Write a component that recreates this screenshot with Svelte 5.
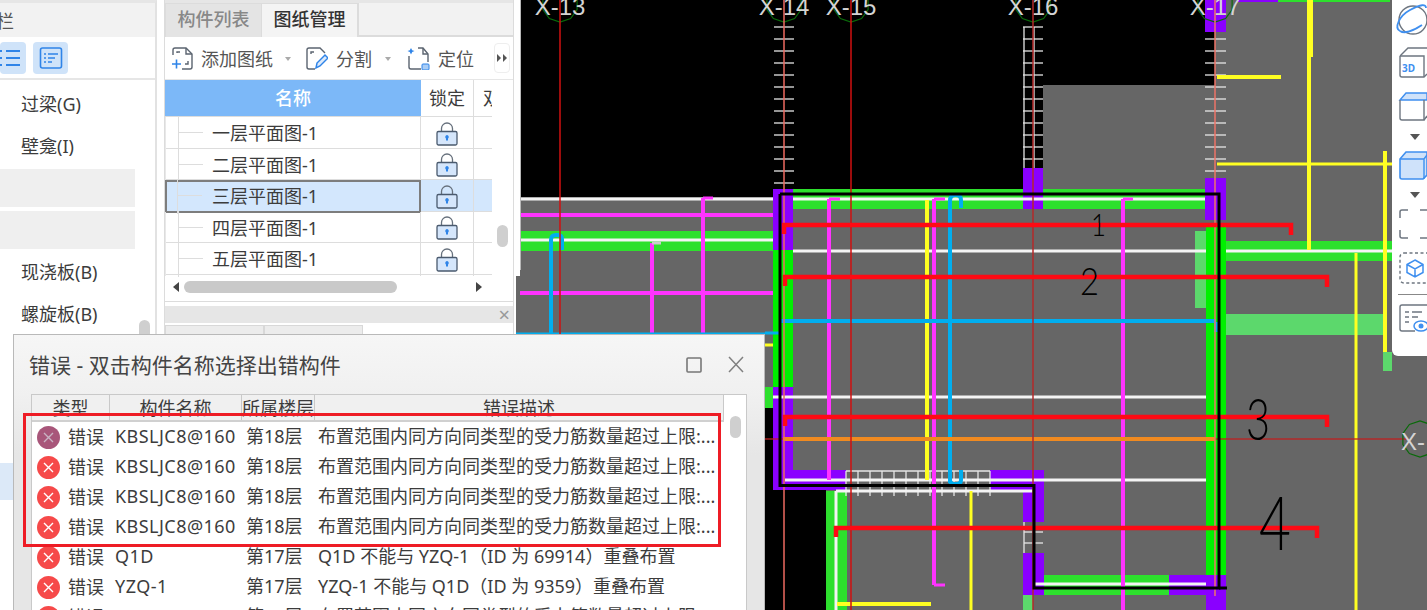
<script>
  const sideItems = [
    { label: '过梁(G)' },
    { label: '壁龛(I)' },
    { label: '', blank: true },
    { label: '', blank: true },
    { label: '现浇板(B)' },
    { label: '螺旋板(B)' }
  ];

  const drawings = ['一层平面图-1', '二层平面图-1', '三层平面图-1', '四层平面图-1', '五层平面图-1'];

  const limitMsg = '布置范围内同方向同类型的受力筋数量超过上限:...';
  const errors = [
    { name: 'KBSLJC8@160', floor: '第18层', desc: limitMsg, dim: true },
    { name: 'KBSLJC8@160', floor: '第18层', desc: limitMsg },
    { name: 'KBSLJC8@160', floor: '第18层', desc: limitMsg },
    { name: 'KBSLJC8@160', floor: '第18层', desc: limitMsg },
    { name: 'Q1D', floor: '第17层', desc: 'Q1D 不能与 YZQ-1（ID 为 69914）重叠布置' },
    { name: 'YZQ-1', floor: '第17层', desc: 'YZQ-1 不能与 Q1D（ID 为 9359）重叠布置' },
    { name: 'KBSLJC8@160', floor: '第17层', desc: limitMsg }
  ];

  // drawing colours
  const GRAY = '#666666';
  const BLACK = '#000000';
  const GREEN = '#2de02d';
  const LIME = '#00f000';
  const SOFT = '#5cd86c';
  const PURPLE = '#8a00ff';
  const WHITE = '#f4f4f4';
  const PINK = '#ff33ff';
  const YELLOW = '#ffff22';
  const CYAN = '#00aeef';
  const RED = '#ff0a14';

  // [x, y, w, h, colour]
  const blocks = [
    [516, 197, 911, 413, GRAY],
    [1043, 85, 172, 112, GRAY],
    [1215, 0, 212, 197, GRAY],
    [765, 485, 61, 125, BLACK],
    [765, 408, 8, 77, BLACK],
    [520, 231, 253, 20, GREEN],
    [793, 189, 412, 20, GREEN],
    [1226, 241, 166, 20, GREEN],
    [1044, 575, 125, 20, GREEN],
    [765, 387, 8, 21, GREEN],
    [826, 491, 21, 119, GREEN],
    [1278, 0, 112, 2, GREEN],
    [773, 250, 20, 137, LIME],
    [1206, 225, 20, 350, LIME],
    [1195, 231, 11, 77, SOFT],
    [1226, 314, 158, 21, SOFT],
    [1383, 352, 9, 19, SOFT],
    [1023, 595, 10, 15, SOFT],
    [773, 189, 20, 61, PURPLE],
    [773, 387, 20, 103, PURPLE],
    [773, 470, 73, 20, PURPLE],
    [990, 470, 54, 20, PURPLE],
    [1023, 470, 21, 52, PURPLE],
    [1023, 553, 21, 42, PURPLE],
    [1169, 575, 57, 20, PURPLE],
    [1206, 595, 20, 15, PURPLE],
    [1023, 168, 20, 41, PURPLE],
    [1205, 0, 21, 32, PURPLE],
    [1205, 178, 21, 42, PURPLE],
    [1238, 0, 40, 2, PURPLE]
  ];

  // [x1, y1, x2, y2, colour, width]
  const lines = [
    [520, 199, 773, 199, WHITE, 3],
    [793, 199, 1205, 199, WHITE, 3],
    [520, 240, 773, 240, WHITE, 3],
    [793, 251, 1206, 251, WHITE, 3],
    [1226, 251, 1392, 251, WHITE, 3],
    [773, 397, 1206, 397, WHITE, 3],
    [785, 480, 1206, 480, WHITE, 3],
    [836, 491, 1033, 491, WHITE, 3],
    [836, 491, 836, 610, WHITE, 3],
    [1035, 584, 1206, 584, WHITE, 3],
    [520, 215, 773, 215, PINK, 4],
    [520, 293, 773, 293, PINK, 4],
    [703, 198, 703, 335, PINK, 4],
    [703, 198, 713, 198, PINK, 3],
    [652, 243, 652, 335, PINK, 4],
    [652, 243, 661, 243, '#cccccc', 3],
    [829, 199, 829, 480, PINK, 4],
    [829, 199, 840, 199, PINK, 3],
    [934, 199, 934, 585, PINK, 4],
    [934, 199, 945, 199, PINK, 3],
    [934, 585, 945, 585, PINK, 3],
    [1123, 199, 1123, 610, PINK, 4],
    [1123, 199, 1133, 199, PINK, 3],
    [927, 200, 927, 480, YELLOW, 4],
    [971, 491, 971, 610, YELLOW, 3],
    [837, 604, 931, 604, YELLOW, 4],
    [1310, 0, 1310, 57, YELLOW, 6],
    [1309, 57, 1309, 250, YELLOW, 4],
    [1217, 77, 1281, 77, YELLOW, 4],
    [1217, 164, 1392, 164, YELLOW, 3],
    [1385, 151, 1385, 352, YELLOW, 4],
    [1356, 253, 1356, 610, YELLOW, 3],
    [765, 345, 773, 345, YELLOW, 3],
    [781, 321, 1216, 321, CYAN, 4],
    [516, 334, 765, 334, CYAN, 3],
    [765, 333, 780, 333, CYAN, 3]
  ];

  // bent bars with rounded hooks
  const hooks = [
    'M551 335V240q0-5 5-5h2q4 0 4 4V250',
    'M950 483V201q0-6 5-6h1q5 0 5 5V208',
    'M950 470V480q0 4 5 4h1q5 0 5-4V470',
    'M1216 322V332'
  ];

  // ladders of rebar ticks on the axes
  const ticks = [];
  for (let y = 27; y <= 183; y += 12) ticks.push([774, y, 794, y]);
  for (let y = 27; y <= 159; y += 12) ticks.push([1023, y, 1043, y]);
  for (let y = 39; y <= 171; y += 12) ticks.push([1205, y, 1226, y]);
  ticks.push([1024, 27, 1024, 168], [1034, 27, 1034, 168]);
  for (let x = 846; x <= 990; x += 12) ticks.push([x, 471, x, 496]);
  ticks.push([846, 471, 990, 471]);
  ticks.push([1024, 522, 1024, 553], [1034, 530, 1034, 553]);
  ticks.push([1024, 532, 1043, 532], [1024, 543, 1043, 543]);

  const axes = [
    { label: 'X-13', x: 560, y2: 335, color: '#d01010' },
    { label: 'X-14', x: 784, y2: 610, color: '#ee6a60' },
    { label: 'X-15', x: 851, y2: 610, color: '#d01010' },
    { label: 'X-16', x: 1033, y2: 610, color: '#b52a2a' },
    { label: 'X-17', x: 1215, y2: 596, color: '#ee7468' }
  ];

  // section markers: y of the run, start and end x
  const sections = [
    [225, 784, 1291],
    [277, 785, 1327],
    [417, 785, 1327],
    [528, 836, 1317]
  ];

  const marks = [
    { n: '1', x: 1091, y: 236, size: 32, w: 15 },
    { n: '2', x: 1080, y: 295, size: 38, w: 19 },
    { n: '3', x: 1246, y: 440, size: 58, w: 24 },
    { n: '4', x: 1259, y: 550, size: 74, w: 32 }
  ];

  const hexagon = (cx, cy) => {
    const r = 18;
    let pts = [];
    for (let i = 0; i < 10; i++) {
      const a = (i * Math.PI) / 5 + Math.PI / 10;
      pts.push(`${(cx + r * Math.cos(a)).toFixed(1)},${(cy + r * Math.sin(a)).toFixed(1)}`);
    }
    return pts.join(' ');
  };
</script>

<div class="app">
  <aside class="sidebar">
    <div class="side-title">栏</div>
    <div class="side-tools">
      <button class="view-btn first" aria-label="list">
        <svg width="26" height="22" viewBox="0 0 26 22">
          <path d="M0 4h2M0 11h2M0 18h2M6 4h14M6 11h14M6 18h14" stroke="#2f84e8" stroke-width="2" fill="none" />
        </svg>
      </button>
      <button class="view-btn" aria-label="detail">
        <svg width="24" height="24" viewBox="0 0 24 24">
          <rect x="1.5" y="2" width="21" height="20" rx="2" fill="none" stroke="#2f84e8" stroke-width="1.6" />
          <path d="M5 8h2M9 8h10M5 12h2M9 12h7M5 16h2M9 16h4" stroke="#2f84e8" stroke-width="1.4" fill="none" />
        </svg>
      </button>
    </div>
    <ul class="side-list">
      {#each sideItems as item}
        <li class:blank={item.blank}>{item.label}</li>
      {/each}
      <li class="spacer"></li>
      <li class="current"></li>
    </ul>
    <div class="side-thumb"></div>
  </aside>

  <section class="panels">
    <div class="panel">
      <div class="tabs">
        <div class="tab">构件列表</div>
        <div class="tab active">图纸管理</div>
      </div>
      <div class="tools">
        <div class="tool">
          <svg width="23" height="24" viewBox="0 0 23 24" fill="none">
            <path d="M2 9V4a2 2 0 0 1 2-2h11l6 6v13a2 2 0 0 1-2 2h-8" stroke="#5b6470" stroke-width="1.4" />
            <path d="M15 2v6h6M6 7V6h3M17 15v3h-3" stroke="#5b6470" stroke-width="1.4" />
            <path d="M1 18h9M5.500 13.500v9" stroke="#2f84e8" stroke-width="1.6" />
          </svg>
          <span>添加图纸</span>
          <i class="caret"></i>
        </div>
        <div class="tool">
          <svg width="23" height="24" viewBox="0 0 23 24" fill="none">
            <path d="M10 23H4a2 2 0 0 1-2-2V4a2 2 0 0 1 2-2h11l5 5" stroke="#5b6470" stroke-width="1.4" />
            <path d="M6 8V6h3" stroke="#5b6470" stroke-width="1.4" />
            <path d="M11 22l1-5 8-8 3 3-8 8z" fill="#dbe9fb" stroke="#2f84e8" stroke-width="1.5" />
          </svg>
          <span>分割</span>
          <i class="caret"></i>
        </div>
        <div class="tool">
          <svg width="23" height="24" viewBox="0 0 23 24" fill="none">
            <path d="M2 10v11a2 2 0 0 0 2 2h10M11 2h5l5 6v8" stroke="#5b6470" stroke-width="1.4" />
            <path d="M16 2v6h5" stroke="#5b6470" stroke-width="1.4" />
            <path d="M4 2l1.200 2.300L7.500 5 5.200 6 4 8.500 2.800 6 .500 5l2.300-.7z" fill="#2f84e8" />
            <rect x="15" y="18" width="7" height="6" rx="1" fill="#a9cdf6" stroke="#2f84e8" />
          </svg>
          <span>定位</span>
        </div>
        <div class="more">
          <svg width="10" height="8" viewBox="0 0 10 8"><path d="M0 0l4 4-4 4zM6 0l4 4-4 4z" fill="#555" /></svg>
        </div>
      </div>
      <div class="grid-wrap">
        <div class="sheet">
          <div class="sheet-head">
            <div class="h-name">名称</div>
            <div class="h-lock">锁定</div>
            <div class="h-more">双</div>
          </div>
          {#each drawings as name, i}
            <div class="sheet-row" class:selected={i === 2}>
              <div class="c-name"><i class="branch"></i>{name}</div>
              <div class="c-lock">
                <svg width="22" height="24" viewBox="0 0 22 24" fill="none">
                  <path d="M5.500 10V6.500a5.500 5.500 0 0 1 11 0V10" stroke="#66707c" stroke-width="1.3" />
                  <rect x="1" y="9.500" width="20" height="13.500" rx="1.500" fill="#d5e6fb" stroke="#4a5a6e" stroke-width="1.3" />
                  <path d="M11 13.500v5" stroke="#2f84e8" stroke-width="2" />
                  <circle cx="11" cy="15" r="1.800" fill="#2f84e8" />
                </svg>
              </div>
              <div class="c-more"></div>
            </div>
          {/each}
        </div>
        <div class="vscroll"><div class="vthumb"></div></div>
      </div>
      <div class="hscroll">
        <i class="arrow left"></i>
        <div class="hthumb"></div>
        <i class="arrow right"></i>
      </div>
    </div>
    <div class="panel-two">
      <div class="two-head"><span>×</span></div>
      <div class="two-tabs"><div></div><div></div></div>
    </div>
  </section>

  <main class="canvas">
    <svg class="plan" width="911" height="610" viewBox="516 0 911 610">
      <rect x="516" y="0" width="911" height="610" fill={BLACK} />
      {#each blocks as b}
        <rect x={b[0]} y={b[1]} width={b[2]} height={b[3]} fill={b[4]} />
      {/each}
      {#each ticks as t}
        <line x1={t[0]} y1={t[1]} x2={t[2]} y2={t[3]} stroke="#e6e6e6" stroke-width="1.300" />
      {/each}
      {#each lines as l}
        <line x1={l[0]} y1={l[1]} x2={l[2]} y2={l[3]} stroke={l[4]} stroke-width={l[5]} />
      {/each}
      {#each hooks as d}
        <path {d} fill="none" stroke={CYAN} stroke-width="4" />
      {/each}
      <line x1="765" y1="439" x2="1408" y2="439" stroke="#c02020" stroke-width="1.300" opacity="0.850" />
      <line x1="783" y1="439" x2="1215" y2="439" stroke="#f08a20" stroke-width="4" />

      {#each axes as a}
        <polygon points={hexagon(a.x, 4)} fill="none" stroke="#0a6a0a" stroke-width="1.200" />
        <text x={a.x} y="15" class="axis-label">{a.label}</text>
        <line x1={a.x} y1="0" x2={a.x} y2={a.y2} stroke={a.color} stroke-width="1.500" />
      {/each}
      <polygon points={hexagon(1420, 439)} fill="none" stroke="#0a6a0a" stroke-width="1.200" />
      <text x="1401" y="450" class="axis-label side">X-</text>

      {#each sections as s}
        <path d="M{s[1]} {s[0] + 9}V{s[0]}H{s[2]}V{s[0] + 10}" fill="none" stroke={RED} stroke-width="4.500" />
      {/each}
      <path d="M780 194H1219V588H1034V485.500H780V194" fill="none" stroke="#000" stroke-width="3" />
      <path d="M1219 588H1227" stroke="#000" stroke-width="3" />
      {#each marks as m}
        <text x={m.x} y={m.y} font-size={m.size} textLength={m.w} lengthAdjust="spacingAndGlyphs" class="mark">{m.n}</text>
      {/each}
      <rect x="516" y="0" width="4" height="276" fill="#ffffff" />
      <line x1="520.500" y1="0" x2="520.500" y2="270" stroke="#b8b8b8" />
    </svg>

    <nav class="view-tools">
      <svg width="35" height="36" viewBox="0 0 35 36" fill="none">
        <circle cx="21" cy="18" r="14" stroke="#6e7680" stroke-width="1.400" />
        <path d="M8 29C2 26 7 14 18 8S34 2 34 6" stroke="#3f8fef" stroke-width="1.800" />
        <path d="M8 29c4 3 13 0 22-6" stroke="#3f8fef" stroke-width="1.800" />
      </svg>
      <svg width="35" height="32" viewBox="0 0 35 32" fill="none">
        <path d="M8 10l8-8h19M8 10v19a2 2 0 0 0 2 2h22l3-3" stroke="#6e7680" stroke-width="1.400" />
        <path d="M8 10h24v21" stroke="#6e7680" stroke-width="1.400" />
        <text x="10" y="26" class="tag3d">3D</text>
      </svg>
      <svg width="35" height="32" viewBox="0 0 35 32" fill="none">
        <path d="M8 10l6-7h21v7z" fill="#cfe2fa" stroke="#3f8fef" stroke-width="1.400" />
        <path d="M8 10v18a2 2 0 0 0 2 2h22V10" stroke="#6e7680" stroke-width="1.400" />
        <path d="M32 30l3-4" stroke="#6e7680" stroke-width="1.400" />
      </svg>
      <i class="down"></i>
      <svg width="35" height="32" viewBox="0 0 35 32" fill="none">
        <path d="M8 10l6-7h21v23l-4 4H10a2 2 0 0 1-2-2z" fill="#cfe2fa" stroke="#3f8fef" stroke-width="1.600" />
        <path d="M8 10h24v20M32 10l3-4" stroke="#3f8fef" stroke-width="1.400" />
      </svg>
      <i class="down"></i>
      <svg width="35" height="32" viewBox="0 0 35 32" fill="none">
        <path d="M8 10V4a2 2 0 0 1 2-2h6M28 2h7M8 22v6a2 2 0 0 0 2 2h6M28 30h7" stroke="#6e7680" stroke-width="1.500" />
      </svg>
      <svg width="35" height="34" viewBox="0 0 35 34" fill="none">
        <rect x="8" y="2" width="32" height="30" rx="4" stroke="#6e7680" stroke-width="1.400" stroke-dasharray="3 2.500" />
        <path d="M23 9l8 4.500v8L23 26l-8-4.500v-8zM15 13.500l8 4.500 8-4.500M23 18v8" stroke="#3f8fef" stroke-width="1.500" />
      </svg>
      <div class="tools-rule"></div>
      <svg width="35" height="30" viewBox="0 0 35 30" fill="none">
        <path d="M35 2H10a2 2 0 0 0-2 2v22a2 2 0 0 0 2 2h13" stroke="#6e7680" stroke-width="1.400" />
        <path d="M13 9h4M20 9h10M13 14h4M20 14h6M13 19h4" stroke="#6e7680" stroke-width="1.400" />
        <ellipse cx="29" cy="23" rx="7" ry="5" stroke="#3f8fef" stroke-width="1.500" />
        <circle cx="29" cy="23" r="2.500" fill="#3f8fef" />
      </svg>
    </nav>
  </main>

  <div class="dialog">
    <header class="dlg-title">
      <span>错误 - 双击构件名称选择出错构件</span>
      <div class="dlg-btns">
        <svg width="16" height="16" viewBox="0 0 16 16"><rect x="1" y="1" width="14" height="14" rx="1" fill="none" stroke="#777" stroke-width="1.600" /></svg>
        <svg width="16" height="17" viewBox="0 0 16 17"><path d="M1 1l14 15M15 1L1 16" stroke="#808080" stroke-width="1.500" fill="none" /></svg>
      </div>
    </header>
    <div class="err-table">
      <div class="err-main">
        <div class="err-head">
          <div>类型</div>
          <div>构件名称</div>
          <div>所属楼层</div>
          <div>错误描述</div>
        </div>
        {#each errors as e}
          <div class="err-row">
            <div class="err-type">
              <svg width="23" height="23" viewBox="0 0 23 23">
                <circle cx="11.500" cy="11.500" r="11.500" fill={e.dim ? '#a8567a' : '#f64a4a'} />
                <path d="M7 7l9 9M16 7l-9 9" stroke={e.dim ? '#c9b3c4' : '#fff'} stroke-width="1.400" fill="none" />
              </svg>
              <span>错误</span>
            </div>
            <div class="err-name">{e.name}</div>
            <div class="err-floor">{e.floor}</div>
            <div class="err-desc">{e.desc}</div>
          </div>
        {/each}
      </div>
      <div class="err-scroll"><div class="err-thumb"></div></div>
    </div>
  </div>
  <div class="callout"></div>
</div>

<style>
  :global(body) {
    margin: 0;
    background: #fff;
  }

  .app {
    position: relative;
    display: flex;
    width: 1427px;
    height: 610px;
    overflow: hidden;
    font-family: "Noto Sans", "Noto Sans CJK SC", sans-serif;
    font-size: 18px;
    color: #3c3c3c;
    background: #fff;
  }

  /* left component tree */
  .sidebar {
    position: relative;
    flex: none;
    box-sizing: border-box;
    width: 157px;
    border-top: 3px solid #e6e6e6;
    border-right: 2px solid #e2e2e2;
  }

  .side-title {
    box-sizing: border-box;
    height: 34px;
    padding-top: 3px;
    line-height: 30px;
    background: #f2f2f2;
    margin-left: -4px;
    color: #555;
  }

  .side-tools {
    display: flex;
    gap: 7px;
    align-items: center;
    height: 40px;
    padding-top: 1px;
    border-bottom: 2px solid #e6e6e6;
    box-sizing: content-box;
  }

  .view-btn {
    display: flex;
    align-items: center;
    justify-content: center;
    width: 35px;
    height: 32px;
    padding: 0;
    border: 0;
    border-radius: 4px;
    background: #cfe3f9;
  }

  .view-btn.first {
    width: 26px;
  }

  .side-list {
    margin: 0;
    padding: 3px 0 0;
    list-style: none;
  }

  .side-list li {
    height: 42px;
    line-height: 42px;
    padding-left: 21px;
  }

  .side-list li.blank {
    height: 38px;
    margin: 2px 20px 4px 0;
    background: #efefef;
  }

  .side-list li.blank + li:not(.blank) {
    margin-top: -2px;
  }

  .side-list li.spacer {
    height: 128px;
  }

  .side-list li.current {
    height: 37px;
    background: #dce9f8;
  }

  .side-thumb {
    position: absolute;
    right: 5px;
    top: 317px;
    width: 11px;
    height: 22px;
    border-radius: 6px;
    background: #cfcfcf;
  }

  /* drawing manager */
  .panels {
    flex: none;
    box-sizing: border-box;
    width: 350px;
    margin: 0 2px 0 7px;
    border-left: 1px solid #dcdcdc;
    border-right: 1px solid #dcdcdc;
  }

  .panel {
    box-sizing: border-box;
    height: 302px;
    border-top: 3px solid #e6e6e6;
    border-bottom: 1px solid #dcdcdc;
  }

  .tabs {
    display: flex;
    height: 34px;
    box-sizing: border-box;
    border-bottom: 2px solid #dcdcdc;
    background: #f2f2f2;
  }

  .tab {
    box-sizing: border-box;
    width: 97px;
    height: 34px;
    border: 1px solid #dcdcdc;
    border-bottom: 0;
    text-align: center;
    line-height: 31px;
    font-weight: 500;
    font-size: 18px;
    color: #888;
    background: #e4e4e4;
  }

  .tab.active {
    color: #333;
    background: #f4f4f4;
    border-width: 1px 2px 0 0;
  }

  .tools {
    position: relative;
    display: flex;
    align-items: center;
    height: 43px;
    padding-left: 6px;
    box-sizing: border-box;
    border-bottom: 1px solid #e6e6e6;
  }

  .tool {
    display: flex;
    align-items: center;
    gap: 7px;
    margin-right: 9px;
    color: #555;
  }

  .tool + .tool {
    gap: 8px;
  }

  .tool:nth-child(2) {
    margin-right: 11px;
  }

  .tool svg {
    flex: none;
  }

  .caret {
    width: 0;
    height: 0;
    margin: 2px 5px 0 5px;
    border-left: 3.500px solid transparent;
    border-right: 3.500px solid transparent;
    border-top: 4px solid #aaa;
  }

  .more {
    position: absolute;
    right: 3px;
    top: 6px;
    display: flex;
    align-items: center;
    justify-content: center;
    width: 14px;
    height: 28px;
    border: 1px solid #eee;
    border-radius: 4px;
  }

  .grid-wrap {
    display: flex;
    height: 197px;
    overflow: hidden;
  }

  .sheet {
    flex: none;
    width: 327px;
    overflow: hidden;
  }

  .sheet-head,
  .sheet-row {
    display: grid;
    grid-template-columns: 256px 53px 18px;
  }

  .sheet-head {
    height: 37px;
    line-height: 36px;
    border-bottom: 1px solid #ddd;
    box-sizing: border-box;
  }

  .h-name {
    text-align: center;
    color: #fff;
    font-weight: 500;
    background: #7cb8f8;
  }

  .h-lock {
    text-align: center;
    border-right: 1px solid #ddd;
  }

  .h-more {
    padding-left: 9px;
    overflow: hidden;
    white-space: nowrap;
  }

  .sheet-row {
    height: 31.500px;
    box-sizing: border-box;
    border-bottom: 1px solid #ddd;
  }

  .c-name {
    position: relative;
    box-sizing: border-box;
    padding-left: 46px;
    line-height: 33px;
    border-left: 1px solid #e8e8e8;
    border-right: 1px solid #ddd;
  }

  .branch {
    position: absolute;
    left: 12px;
    top: -1px;
    bottom: -1px;
    width: 24px;
    border-left: 1px solid #ddd;
  }

  .branch::after {
    content: "";
    position: absolute;
    left: 0;
    right: 0;
    top: 16px;
    border-top: 1px solid #ddd;
  }

  .c-lock {
    display: flex;
    align-items: center;
    justify-content: center;
    border-right: 1px solid #ddd;
  }

  .sheet-row.selected {
    background: #d3e7fd;
  }

  .sheet-row.selected .c-name {
    outline: 2px solid #7d7d7d;
    outline-offset: -2px;
    border: 0;
    padding-left: 47px;
  }

  .vscroll {
    flex: 1;
    position: relative;
  }

  .vthumb {
    position: absolute;
    left: 5px;
    top: 145px;
    width: 11px;
    height: 22px;
    border-radius: 6px;
    background: #cfcfcf;
  }

  .hscroll {
    display: flex;
    align-items: center;
    height: 20px;
    padding-left: 8px;
    box-sizing: border-box;
  }

  .arrow {
    width: 0;
    height: 0;
    border-top: 5px solid transparent;
    border-bottom: 5px solid transparent;
  }

  .arrow.left {
    border-right: 6px solid #444;
  }

  .arrow.right {
    margin-left: 79px;
    border-left: 6px solid #444;
  }

  .hthumb {
    width: 213px;
    height: 12px;
    margin-left: 5px;
    border-radius: 6px;
    background: #c9c9c9;
  }

  /* second panel mostly hidden by the dialog */
  .panel-two {
    margin-top: 4px;
  }

  .two-head {
    display: flex;
    justify-content: flex-end;
    height: 17px;
    padding-right: 3px;
    background: #e6e6e6;
    color: #999;
    font-size: 20px;
    line-height: 17px;
  }

  .two-tabs {
    display: flex;
    margin-top: 2px;
  }

  .two-tabs div {
    width: 97px;
    height: 12px;
    border: 1px solid #d8d8d8;
    background: #ececec;
  }

  /* CAD viewport */
  .canvas {
    position: relative;
    flex: 1;
    min-width: 0;
  }

  .plan {
    display: block;
  }

  .axis-label {
    font-family: "Liberation Sans", sans-serif;
    font-size: 24px;
    fill: #d4d4d4;
    text-anchor: middle;
  }

  .axis-label.side {
    text-anchor: start;
  }

  .mark {
    font-family: "Lato", sans-serif;
    font-weight: 300;
    fill: #000;
  }

  .view-tools {
    position: absolute;
    top: 0;
    right: 0;
    box-sizing: border-box;
    display: flex;
    flex-direction: column;
    width: 35px;
    height: 356px;
    padding-top: 2px;
    background: #fff;
    border-bottom-left-radius: 6px;
    overflow: hidden;
  }

  .view-tools > * {
    flex: none;
  }

  .view-tools svg {
    display: block;
  }

  .view-tools > :nth-child(2) { margin-top: 8px; }
  .view-tools > :nth-child(3) { margin-top: 12px; }
  .view-tools > :nth-child(4) { margin-top: 12px; }
  .view-tools > :nth-child(5) { margin-top: 9px; }
  .view-tools > :nth-child(6) { margin-top: 11px; }
  .view-tools > :nth-child(7) { margin-top: 10px; }
  .view-tools > :nth-child(8) { margin-top: 11px; }
  .view-tools > :nth-child(9) { margin-top: 9px; }
  .view-tools > :nth-child(10) { margin-top: 8px; }

  .tag3d {
    font-family: "Noto Sans", sans-serif;
    font-size: 10px;
    font-weight: 700;
    fill: #3f8fef;
  }

  .down {
    width: 0;
    height: 0;
    margin-left: 18px;
    border-left: 5px solid transparent;
    border-right: 5px solid transparent;
    border-top: 6px solid #555;
  }

  .tools-rule {
    height: 1px;
    margin-left: 6px;
    background: #888;
  }

  /* error window */
  .dialog {
    position: absolute;
    left: 13px;
    top: 334px;
    width: 752px;
    height: 300px;
    box-sizing: border-box;
    padding: 0 19px 0 17px;
    border: 1px solid #b9b9b9;
    background: linear-gradient(180deg, #f6f6f6, #f0f0f0 60px, #e6e6e6 120px);
  }

  .dlg-title {
    display: flex;
    align-items: center;
    justify-content: space-between;
    height: 59px;
    font-size: 21px;
    color: #444;
  }

  .dlg-title > span {
    margin: -2px 0 0 -2px;
  }

  .dlg-btns {
    display: flex;
    gap: 26px;
    margin-right: 1px;
    align-items: center;
  }

  .dlg-btns svg {
    display: block;
  }

  .err-table {
    display: flex;
    width: 716px;
    height: 260px;
    box-sizing: border-box;
    border: 1px solid #c9c9c9;
    background: #fff;
  }

  .err-main {
    flex: none;
    width: 692px;
  }

  .err-head,
  .err-row {
    display: grid;
    grid-template-columns: 78px 132px 73px 409px;
  }

  .err-head {
    height: 25px;
    line-height: 27px;
    background: #f0f0f0;
    border-bottom: 2px solid #d0d0d0;
  }

  .err-head div {
    text-align: center;
    white-space: nowrap;
    overflow: hidden;
    border-right: 1px solid #c9c9c9;
  }

  .err-row {
    height: 30px;
    line-height: 29px;
    white-space: nowrap;
  }

  .err-row > div {
    overflow: hidden;
  }

  .err-row > .err-type {
    display: flex;
    align-items: center;
    gap: 8px;
    padding-left: 5px;
    overflow: visible;
  }

  .err-type svg {
    flex: none;
  }

  .err-name {
    padding-left: 5px;
    letter-spacing: 0.45px;
  }

  .err-floor {
    padding-left: 4px;
  }

  .err-desc {
    padding-left: 3px;
  }

  .err-scroll {
    flex: 1;
    position: relative;
  }

  .err-thumb {
    position: absolute;
    left: 6px;
    top: 21px;
    width: 11px;
    height: 22px;
    border-radius: 6px;
    background: #cfcfcf;
  }

  .callout {
    position: absolute;
    left: 23px;
    top: 413px;
    box-sizing: border-box;
    width: 698px;
    height: 134px;
    border: 3px solid #ee1c25;
  }
</style>
